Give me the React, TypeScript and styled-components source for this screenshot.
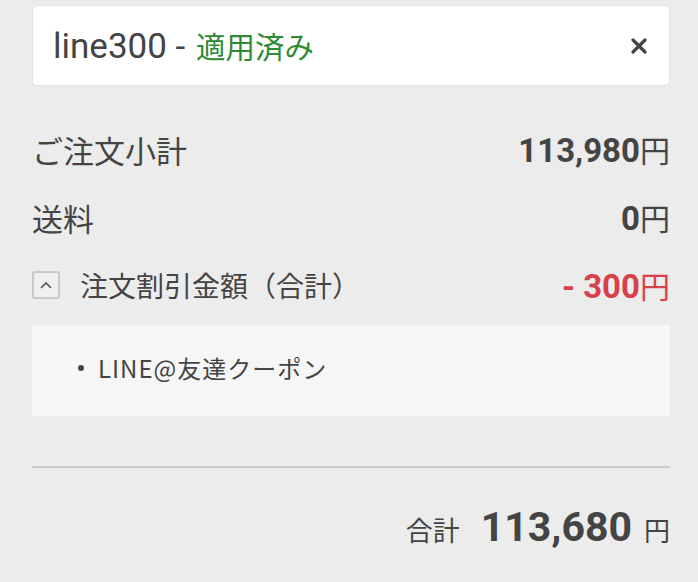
import React from "react";
import styled, { createGlobalStyle } from "styled-components";

const GlobalStyle = createGlobalStyle`
  html, body {
    margin: 0;
    padding: 0;
    background: #ececec;
  }
  body {
    font-family: "Roboto", "Noto Sans CJK JP", sans-serif;
    color: #444;
  }
`;

const Page = styled.div`
  padding: 5px 28px 0 32px;
  width: 698px;
  box-sizing: border-box;
`;

const CouponCard = styled.div`
  height: 81px;
  box-sizing: border-box;
  background: #fff;
  border: 1px solid #e2e2e2;
  border-radius: 5px;
  display: flex;
  align-items: center;
  justify-content: space-between;
  padding: 0 22px 0 20px;
`;

const CouponTitle = styled.div`
  display: flex;
  align-items: baseline;
  font-family: "Roboto", "Noto Sans CJK JP", sans-serif;
  font-size: 35px;
  color: #444;
  white-space: pre;
`;

const Applied = styled.span`
  font-family: "Noto Sans CJK JP", sans-serif;
  font-size: 29.5px;
  color: #2f8a34;
  margin-left: 2px;
`;

const CloseButton = styled.button`
  border: 0;
  background: none;
  padding: 0;
  width: 16px;
  height: 16px;
  display: flex;
  cursor: pointer;
`;

const Rows = styled.div`
  margin-top: 29px;
  display: flex;
  flex-direction: column;
`;

const Row = styled.div`
  height: 68px;
  display: flex;
  align-items: center;
  justify-content: space-between;
`;

const LabelGroup = styled.div`
  display: flex;
  align-items: center;
  gap: 20px;
`;

const Label = styled.span<{ $size?: number }>`
  font-family: "Noto Sans CJK JP", sans-serif;
  font-size: ${(p) => p.$size ?? 31}px;
  color: #444;
  line-height: 1;
`;

const Amount = styled.span<{ $red?: boolean }>`
  display: flex;
  align-items: baseline;
  color: ${(p) => (p.$red ? "#d8404a" : "#444")};
  white-space: pre;
`;

const Num = styled.span<{ $size?: number }>`
  font-family: "Roboto", sans-serif;
  font-weight: 700;
  font-size: ${(p) => p.$size ?? 33}px;
`;

const Yen = styled.span<{ $size?: number }>`
  font-family: "Noto Sans CJK JP", sans-serif;
  font-weight: 400;
  font-size: ${(p) => p.$size ?? 30}px;
`;

const ToggleBox = styled.button`
  width: 28px;
  height: 28px;
  box-sizing: border-box;
  border: 2px solid #c8c8c8;
  border-radius: 3px;
  background: #efefef;
  padding: 0;
  display: flex;
  align-items: center;
  justify-content: center;
`;

const DetailBox = styled.div`
  margin-top: 6px;
  height: 91px;
  background: #f6f6f6;
  display: flex;
  align-items: center;
`;

const DetailList = styled.ul`
  margin: 0 0 6px;
  padding: 0 0 0 46px;
  list-style: none;
`;

const DetailItem = styled.li`
  display: flex;
  align-items: center;
  gap: 14px;
  font-family: "Noto Sans CJK JP", sans-serif;
  font-size: 24px;
  letter-spacing: 1px;
  color: #444;
  &::before {
    content: "";
    width: 6px;
    height: 6px;
    border-radius: 50%;
    background: #444;
  }
`;

const Divider = styled.hr`
  margin: 50px 0 0;
  border: 0;
  height: 2px;
  background: #cacaca;
`;

const TotalRow = styled.div`
  padding-top: 35px;
  display: flex;
  justify-content: flex-end;
  align-items: baseline;
  color: #444;
  white-space: pre;
`;

const TotalLabel = styled.span`
  font-family: "Noto Sans CJK JP", sans-serif;
  font-size: 27px;
  margin-right: 21px;
`;

const TotalYen = styled.span`
  font-family: "Noto Sans CJK JP", sans-serif;
  font-size: 26px;
  margin-left: 12px;
`;

export default function App() {
  return (
    <>
      <GlobalStyle />
      <Page>
        <CouponCard>
          <CouponTitle>
            line300 - <Applied>適用済み</Applied>
          </CouponTitle>
          <CloseButton aria-label="削除">
            <svg width="16" height="16" viewBox="0 0 16 16">
              <path
                d="M2 2 L14 14 M14 2 L2 14"
                stroke="#444"
                strokeWidth="3.2"
                strokeLinecap="round"
              />
            </svg>
          </CloseButton>
        </CouponCard>

        <Rows>
          <Row>
            <Label>ご注文小計</Label>
            <Amount>
              <Num>113,980</Num>
              <Yen>円</Yen>
            </Amount>
          </Row>
          <Row>
            <Label>送料</Label>
            <Amount>
              <Num>0</Num>
              <Yen>円</Yen>
            </Amount>
          </Row>
          <Row>
            <LabelGroup>
              <ToggleBox aria-label="閉じる">
                <svg width="14" height="10" viewBox="0 0 14 10">
                  <path
                    d="M2 8 L7 3 L12 8"
                    fill="none"
                    stroke="#555"
                    strokeWidth="1.6"
                  />
                </svg>
              </ToggleBox>
              <Label $size={28}>注文割引金額（合計）</Label>
            </LabelGroup>
            <Amount $red>
              <Num>- 300</Num>
              <Yen>円</Yen>
            </Amount>
          </Row>
        </Rows>

        <DetailBox>
          <DetailList>
            <DetailItem>LINE@友達クーポン</DetailItem>
          </DetailList>
        </DetailBox>

        <Divider />

        <TotalRow>
          <TotalLabel>合計</TotalLabel>
          <Num $size={41}>113,680</Num>
          <TotalYen>円</TotalYen>
        </TotalRow>
      </Page>
    </>
  );
}
